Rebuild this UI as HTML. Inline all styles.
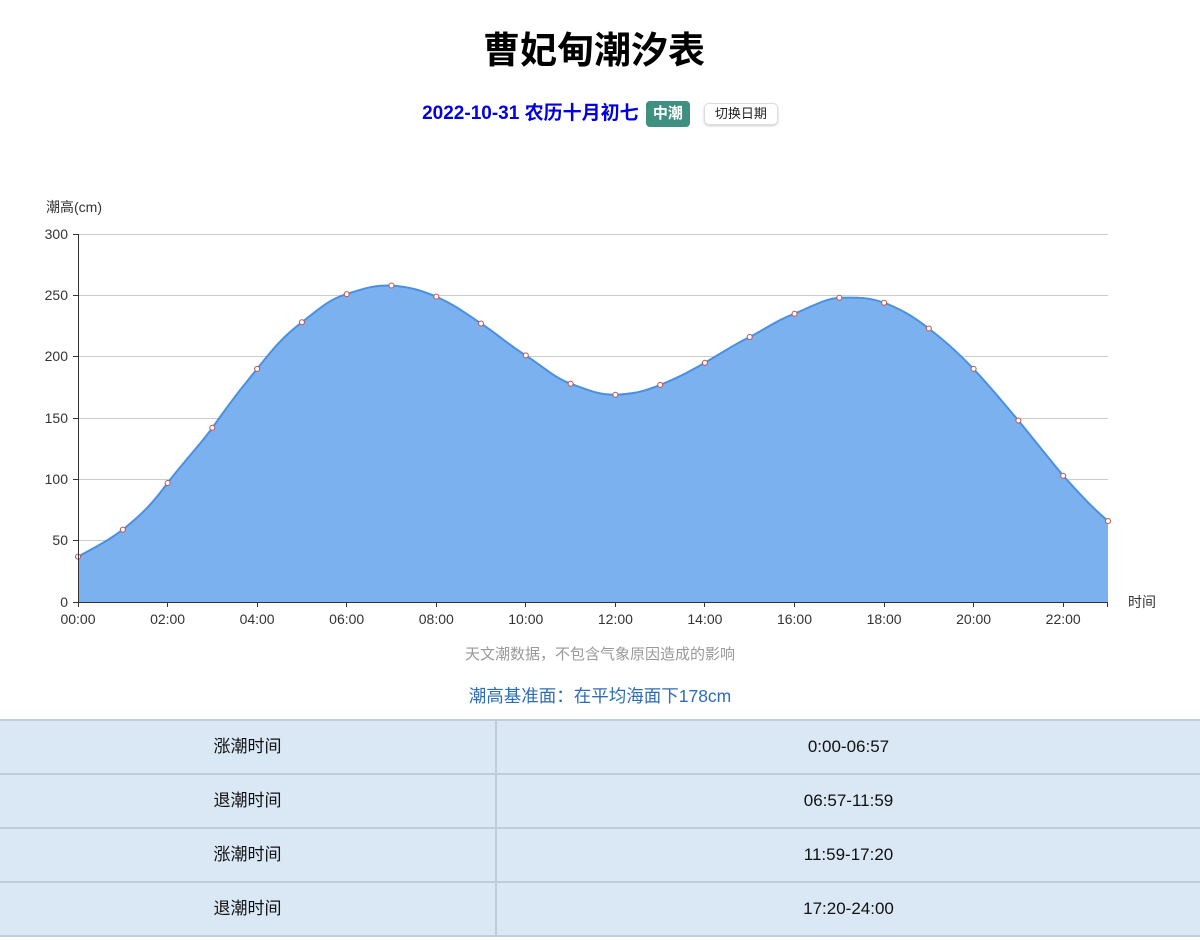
<!DOCTYPE html>
<html><head><meta charset="utf-8"><style>
body{margin:0;width:1200px;height:941px;background:#fff;font-family:"Liberation Sans","Noto Sans CJK SC",sans-serif;position:relative;overflow:hidden}
h1{position:absolute;top:26px;left:-6px;width:1200px;text-align:center;margin:0;font-size:37px;font-weight:bold;color:#000;line-height:50px}
.sub{position:absolute;top:101px;left:0;width:1200px;text-align:center;font-size:19px;color:#0000e0;font-weight:bold;line-height:26px}
.tag{display:inline-block;background:#3f9080;color:#fff;font-size:15px;padding:0 7px;border-radius:4px;line-height:26px;vertical-align:top;margin-left:2px}
.btn{display:inline-block;border:1px solid #ddd;border-radius:5px;box-shadow:0 1px 2px #ccc;color:#222;font-weight:normal;font-size:13px;line-height:20px;padding:0 10px;margin-left:14px;vertical-align:top;margin-top:2px;background:#fff}
.note{position:absolute;top:643px;width:1200px;text-align:center;font-size:15px;color:#999}
.base{position:absolute;top:683px;width:1200px;text-align:center;font-size:17.5px;color:#2e6db5}
table{position:absolute;top:719px;left:0;width:1200px;border-collapse:collapse}
td{background:#dae7f5;border:2px solid #c0ccd9;height:52px;padding:0;text-align:center;font-size:17px;color:#111;border-left:none;border-right:none;vertical-align:middle}
td+td{border-left:2px solid #c0ccd9}
td span{display:inline-block;line-height:20px;vertical-align:middle}
</style></head><body>
<h1>曹妃甸潮汐表</h1>
<div class="sub">2022-10-31 农历十月初七 <span class="tag">中潮</span><span class="btn">切换日期</span></div>
<svg width="1200" height="640" style="position:absolute;top:0;left:0" font-family="Liberation Sans, Noto Sans CJK SC, sans-serif" font-size="13" fill="#333">
<text x="46" y="212" font-size="14">潮高(cm)</text>
<g stroke="#ccc" stroke-width="1">
<line x1="78" y1="234.5" x2="1108" y2="234.5"/><line x1="78" y1="295.5" x2="1108" y2="295.5"/><line x1="78" y1="356.5" x2="1108" y2="356.5"/><line x1="78" y1="418.5" x2="1108" y2="418.5"/><line x1="78" y1="479.5" x2="1108" y2="479.5"/><line x1="78" y1="540.5" x2="1108" y2="540.5"/>
</g>
<path fill="#7cb1f0" d="M78,556.6 C100,545 112,538 122.8,529.6 C145,512 155,500 167.6,483 C185,460 200,445 212.3,427.8 C232,400 240,390 257.1,368.9 C275,346 285,335 301.9,322.3 C320,308 330,299 346.7,294.1 C365,288 375,285 391.5,285.5 C410,287 420,290 436.3,296.6 C455,305 465,313 481,323.5 C500,336 510,346 525.8,355.4 C545,368 555,378 570.6,383.7 C590,391 600,395 615.4,394.7 C635,394 645,391 660.2,384.9 C680,377 690,371 704.9,362.8 C725,351 735,344 749.7,337 C770,326 780,319 794.5,313.7 C815,305 825,299 839.3,297.8 C860,297 870,298 884.1,302.7 C905,311 915,318 928.8,328.5 C950,345 960,355 973.6,368.9 C995,392 1005,405 1018.4,420.5 C1040,447 1050,460 1063.2,475.7 C1085,500 1095,510 1108,521 L1108,602 L78,602 Z"/>
<path fill="none" stroke="#4a90e2" stroke-width="2" d="M78,556.6 C100,545 112,538 122.8,529.6 C145,512 155,500 167.6,483 C185,460 200,445 212.3,427.8 C232,400 240,390 257.1,368.9 C275,346 285,335 301.9,322.3 C320,308 330,299 346.7,294.1 C365,288 375,285 391.5,285.5 C410,287 420,290 436.3,296.6 C455,305 465,313 481,323.5 C500,336 510,346 525.8,355.4 C545,368 555,378 570.6,383.7 C590,391 600,395 615.4,394.7 C635,394 645,391 660.2,384.9 C680,377 690,371 704.9,362.8 C725,351 735,344 749.7,337 C770,326 780,319 794.5,313.7 C815,305 825,299 839.3,297.8 C860,297 870,298 884.1,302.7 C905,311 915,318 928.8,328.5 C950,345 960,355 973.6,368.9 C995,392 1005,405 1018.4,420.5 C1040,447 1050,460 1063.2,475.7 C1085,500 1095,510 1108,521"/>
<g fill="#fff" stroke="#c0504d" stroke-width="1">
<circle cx="78" cy="556.6" r="2.5"/><circle cx="122.8" cy="529.6" r="2.5"/><circle cx="167.6" cy="483" r="2.5"/><circle cx="212.3" cy="427.8" r="2.5"/><circle cx="257.1" cy="368.9" r="2.5"/><circle cx="301.9" cy="322.3" r="2.5"/><circle cx="346.7" cy="294.1" r="2.5"/><circle cx="391.5" cy="285.5" r="2.5"/><circle cx="436.3" cy="296.6" r="2.5"/><circle cx="481" cy="323.5" r="2.5"/><circle cx="525.8" cy="355.4" r="2.5"/><circle cx="570.6" cy="383.7" r="2.5"/><circle cx="615.4" cy="394.7" r="2.5"/><circle cx="660.2" cy="384.9" r="2.5"/><circle cx="704.9" cy="362.8" r="2.5"/><circle cx="749.7" cy="337" r="2.5"/><circle cx="794.5" cy="313.7" r="2.5"/><circle cx="839.3" cy="297.8" r="2.5"/><circle cx="884.1" cy="302.7" r="2.5"/><circle cx="928.8" cy="328.5" r="2.5"/><circle cx="973.6" cy="368.9" r="2.5"/><circle cx="1018.4" cy="420.5" r="2.5"/><circle cx="1063.2" cy="475.7" r="2.5"/><circle cx="1108" cy="521" r="2.5"/>
</g>
<g stroke="#333" stroke-width="1">
<line x1="78.5" y1="234" x2="78.5" y2="602"/><line x1="78" y1="602.5" x2="1108" y2="602.5"/>
<line x1="73" y1="234.5" x2="78" y2="234.5"/><line x1="73" y1="295.5" x2="78" y2="295.5"/><line x1="73" y1="356.5" x2="78" y2="356.5"/><line x1="73" y1="418.5" x2="78" y2="418.5"/><line x1="73" y1="479.5" x2="78" y2="479.5"/><line x1="73" y1="540.5" x2="78" y2="540.5"/><line x1="73" y1="602.5" x2="78" y2="602.5"/>
<line x1="78.5" y1="602" x2="78.5" y2="607"/><line x1="167.5" y1="602" x2="167.5" y2="607"/><line x1="257.5" y1="602" x2="257.5" y2="607"/><line x1="346.5" y1="602" x2="346.5" y2="607"/><line x1="436.5" y1="602" x2="436.5" y2="607"/><line x1="525.5" y1="602" x2="525.5" y2="607"/><line x1="615.5" y1="602" x2="615.5" y2="607"/><line x1="704.5" y1="602" x2="704.5" y2="607"/><line x1="794.5" y1="602" x2="794.5" y2="607"/><line x1="884.5" y1="602" x2="884.5" y2="607"/><line x1="973.5" y1="602" x2="973.5" y2="607"/><line x1="1063.5" y1="602" x2="1063.5" y2="607"/><line x1="1107.5" y1="602" x2="1107.5" y2="607"/>
</g>
<g text-anchor="end" font-size="14">
<text x="68" y="239">300</text><text x="68" y="300">250</text><text x="68" y="361">200</text><text x="68" y="423">150</text><text x="68" y="484">100</text><text x="68" y="545">50</text><text x="68" y="607">0</text>
</g>
<g text-anchor="middle" font-size="14">
<text x="78" y="624">00:00</text><text x="167.6" y="624">02:00</text><text x="257.1" y="624">04:00</text><text x="346.7" y="624">06:00</text><text x="436.3" y="624">08:00</text><text x="525.8" y="624">10:00</text><text x="615.4" y="624">12:00</text><text x="704.9" y="624">14:00</text><text x="794.5" y="624">16:00</text><text x="884.1" y="624">18:00</text><text x="973.6" y="624">20:00</text><text x="1063.2" y="624">22:00</text>
</g>
<text x="1128" y="607" font-size="14">时间</text>
</svg>
<div class="note">天文潮数据，不包含气象原因造成的影响</div>
<div class="base">潮高基准面：在平均海面下178cm</div>
<table>
<tr><td style="width:495px"><span>涨潮时间</span></td><td><span>0:00-06:57</span></td></tr>
<tr><td><span>退潮时间</span></td><td><span>06:57-11:59</span></td></tr>
<tr><td><span>涨潮时间</span></td><td><span>11:59-17:20</span></td></tr>
<tr><td><span>退潮时间</span></td><td><span>17:20-24:00</span></td></tr>
</table>
</body></html>
